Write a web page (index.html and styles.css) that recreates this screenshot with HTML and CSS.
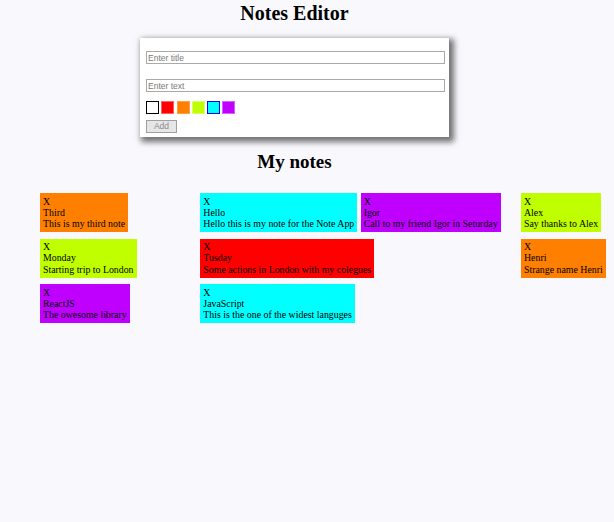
FILE: index.html
```html
<!DOCTYPE html>
<html>
<head>
<meta charset="utf-8">
<link rel="stylesheet" href="styles.css">
</head>
<body>
<div class="page">
  <h1 class="title">Notes Editor</h1>
  <div class="editor">
    <input class="field" type="text" placeholder="Enter title">
    <input class="field field-text" type="text" placeholder="Enter text">
    <div class="swatches">
      <span class="swatch sw-white"></span>
      <span class="swatch sw-red"></span>
      <span class="swatch sw-orange"></span>
      <span class="swatch sw-lime"></span>
      <span class="swatch sw-cyan selected"></span>
      <span class="swatch sw-purple"></span>
    </div>
    <button class="add" disabled>Add</button>
  </div>
  <h2 class="subtitle">My notes</h2>
  <div class="grid">
    <div class="col">
      <div class="note orange"><div>X</div><div>Third</div><div>This is my third note</div></div>
      <div class="note lime"><div>X</div><div>Monday</div><div>Starting trip to London</div></div>
      <div class="note purple"><div>X</div><div>ReactJS</div><div>The owesome library</div></div>
    </div>
    <div class="col">
      <div class="note cyan"><div>X</div><div>Hello</div><div>Hello this is my note for the Note App</div></div>
      <div class="note red"><div>X</div><div>Tusday</div><div>Some actions in London with my colegues</div></div>
      <div class="note cyan"><div>X</div><div>JavaScript</div><div>This is the one of the widest languges</div></div>
    </div>
    <div class="col">
      <div class="note purple"><div>X</div><div>Igor</div><div>Call to my friend Igor in Seturday</div></div>
    </div>
    <div class="col">
      <div class="note lime"><div>X</div><div>Alex</div><div>Say thanks to Alex</div></div>
      <div class="note orange"><div>X</div><div>Henri</div><div>Strange name Henri</div></div>
    </div>
  </div>
</div>
</body>
</html>
```
FILE: styles.css
```css
html, body {
  margin: 0;
  padding: 0;
  background: #f8f8fd;
}
body {
  font-family: "Liberation Serif", "Times New Roman", serif;
  color: #000;
}
.page {
  width: 589px;
  display: flex;
  flex-direction: column;
  align-items: center;
}
.title {
  font-size: 20px;
  font-weight: bold;
  margin: 2px 0 0;
  line-height: 23px;
}
.editor {
  margin-top: 13px;
  width: 309px;
  height: 99px;
  box-sizing: border-box;
  background: #fff;
  padding: 13px 4px 0 6px;
  box-shadow: 3px 3px 6px 2px rgba(0, 0, 0, 0.55);
  display: flex;
  flex-direction: column;
  align-items: flex-start;
}
.field {
  width: 299px;
  height: 13px;
  box-sizing: border-box;
  border: 1px solid #a9a9a9;
  padding: 0 1px;
  margin: 0;
  font-family: "Liberation Sans", Arial, sans-serif;
  font-size: 8.5px;
  background: #fff;
  outline: none;
}
.field::placeholder {
  color: #7a7a7a;
}
.field-text {
  margin-top: 15px;
}
.swatches {
  margin-top: 9px;
  display: flex;
  gap: 2.3px;
}
.swatch {
  width: 13px;
  height: 13px;
  box-sizing: border-box;
  display: block;
}
.sw-white { background: #fff; border: 1px solid #000; }
.sw-red { background: #ff0000; border: 1px solid #ff6060; }
.sw-orange { background: #ff8000; border: 1px solid #ffa040; }
.sw-lime { background: #c0ff00; border: 1px solid #d8ff60; }
.sw-cyan { background: #00ffff; }
.sw-purple { background: #c000ff; border: 1px solid #d860ff; }
.selected { border: 1px solid #0000ff; }
.add {
  margin-top: 6px;
  width: 31px;
  height: 13px;
  padding: 0;
  font-family: "Liberation Sans", Arial, sans-serif;
  font-size: 8.5px;
  color: #8c8c8c;
  background: #e6e6e6;
  border: 1px solid #a0a0a0;
  line-height: 11px;
}
.subtitle {
  font-size: 19px;
  font-weight: bold;
  margin: 14px 0 0;
  line-height: 22px;
}
.grid {
  align-self: flex-start;
  margin: 20px 0 0 40px;
  display: grid;
  grid-template-columns: repeat(3, 160.33px) auto;
}
.col {
  display: flex;
  flex-direction: column;
  align-items: flex-start;
  gap: 6.3px;
}
.note {
  width: max-content;
  font-size: 9.85px;
  line-height: 11.4px;
  padding: 2.5px 3px;
  white-space: nowrap;
}
.orange { background: #ff8000; }
.lime { background: #c0ff00; }
.purple { background: #c000ff; }
.cyan { background: #00ffff; }
.red { background: #ff0000; }
```
